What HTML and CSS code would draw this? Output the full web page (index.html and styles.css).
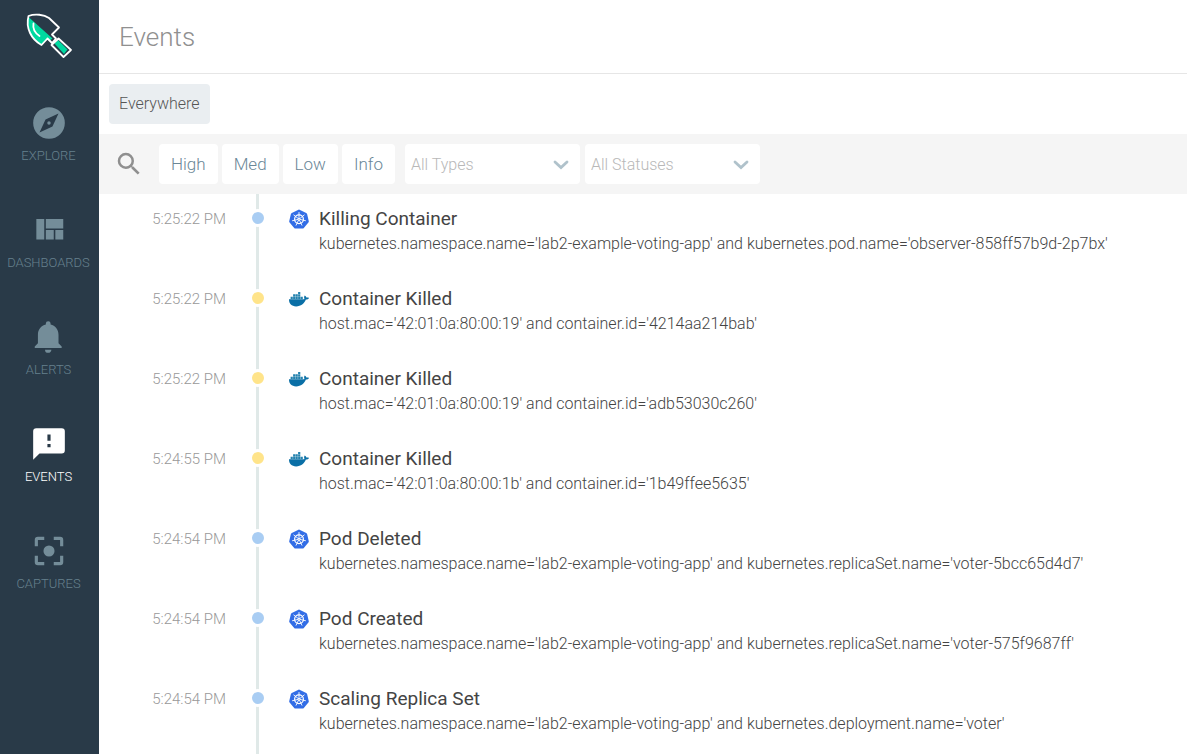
FILE: index.html
```html
<!DOCTYPE html>
<html lang="en">
<head>
<meta charset="utf-8">
<meta name="viewport" content="width=device-width, initial-scale=1">
<title>Events</title>
<link rel="stylesheet" href="styles.css">
</head>
<body>
<svg class="sprite" aria-hidden="true">
  <symbol id="kube" viewBox="0 0 20 20">
    <path fill="#326de6" d="M10 .5 17.2 3.9Q17.9 4.2 18.1 5L19.8 12.2Q19.9 13 19.4 13.6L14.8 19.1Q14.3 19.6 13.5 19.6H6.5Q5.7 19.6 5.2 19.1L.6 13.6Q.1 13 .2 12.2L1.9 5Q2.1 4.2 2.8 3.9Z"/>
    <g fill="none" stroke="#fff" stroke-linecap="round">
      <circle cx="10" cy="10.2" r="4.4" stroke-width="1.2"/>
      <path stroke-width=".9" d="M10 10.2V3.5M10 10.2 15.2 6M10 10.2 16.5 11.7M10 10.2 12.9 16.2M10 10.2 7.1 16.2M10 10.2 3.5 11.7M10 10.2 4.8 6"/>
    </g>
    <circle cx="10" cy="10.2" r="1.3" fill="#fff"/><circle cx="10" cy="10.2" r=".5" fill="#326de6"/>
  </symbol>
  <symbol id="docker" viewBox="0 0 20 20">
    <path fill="#0a6fa6" d="M0 10.3H14.2C14.7 10.3 15.2 10.1 15.5 9.9 14.9 8.8 15 7.4 15.8 6.5 16.8 7.1 17.3 7.8 17.4 8.6 18.4 8.3 19.4 8.5 20 8.9 19.4 10.1 18.3 10.6 16.9 10.6 15.2 14.8 12 17.4 7.1 17.4 2.3 17.400-.1 14.5 0 10.3Z"/>
    <path fill="#2582ae" d="M1.6 7.7h2.2v2.2H1.6zM4.1 7.7h2.2v2.2H4.1zM6.6 7.7h2.2v2.2H6.6zM9.1 7.7h2.2v2.2H9.1zM11.6 7.7h2.2v2.2h-2.2zM4.1 5.3h2.2v2.1H4.1zM6.6 5.3h2.2v2.1H6.6zM9.1 5.3h2.2v2.1H9.1zM9.1 2.9h2.2V5H9.1z"/>
  </symbol>
  <symbol id="chevron" viewBox="0 0 16 10">
    <path fill="none" stroke="#b0c2cb" stroke-width="2.8" stroke-linecap="round" d="M2 2 8 7.6 14 2"/>
  </symbol>
</svg>
<div class="app">
  <aside class="sidebar">
    <a class="logo" href="#" aria-label="Home">
      <svg viewBox="0 0 48 48" width="48" height="48">
        <path fill="#00d8a0" d="M3.5 5C1.5 16 6 27 16 33L22.500 26 25 28.500 27.500 26.500ZM29.500 31.500 33 28 42.500 37.500 39 42Z"/>
        <g fill="none" stroke="#fff" stroke-width="1.800" stroke-linejoin="round" stroke-linecap="round">
          <path d="M3.500 4C10 1.500 19 2.500 24 6L34 15.500 27 22.500 31 26.500 27 31 22.500 26.500 16.500 33C6 27 .5 16 3.500 4Z"/>
          <path d="M33.500 26.500 46 38 38.500 45 26.500 33Z"/>
          <path d="M8.500 11.500C7.500 17 10 21 14.500 24"/>
        </g>
      </svg>
    </a>
    <nav class="nav">
      <a class="nav-item" href="#"><svg viewBox="0 0 24 24"><path d="M12 10.900a1.100 1.100 0 1 0 0 2.200 1.100 1.100 0 0 0 0-2.200zM12 2a10 10 0 1 0 0 20 10 10 0 0 0 0-20zm2.190 12.190L6 18l3.810-8.190L18 6z"/></svg><span>EXPLORE</span></a>
      <a class="nav-item" href="#"><svg viewBox="0 0 24 24"><path d="M10 18h5v-6h-5zm-6 0h5V5H4zm12 0h5v-6h-5zM10 5v6h11V5z"/></svg><span>DASHBOARDS</span></a>
      <a class="nav-item" href="#"><svg viewBox="0 0 24 24"><path d="M11.500 22c1.100 0 2-.9 2-2h-4a2 2 0 0 0 2 2zm6.500-6v-5.500c0-3.070-2.130-5.640-5-6.320V3.500a1.500 1.500 0 0 0-3 0v.68c-2.870.68-5 3.250-5 6.320V16l-2 2v1h17v-1z"/></svg><span>ALERTS</span></a>
      <a class="nav-item active" href="#" aria-current="page"><svg viewBox="0 0 24 24"><path d="M20 2H4a2 2 0 0 0-2 2v18l4-4h14a2 2 0 0 0 2-2V4a2 2 0 0 0-2-2zm-7 12h-2v-2h2zm0-4h-2V6h2z"/></svg><span>EVENTS</span></a>
      <a class="nav-item" href="#"><svg viewBox="0 0 24 24"><path d="M5 15H3v4a2 2 0 0 0 2 2h4v-2H5zM5 5h4V3H5a2 2 0 0 0-2 2v4h2zm14-2h-4v2h4v4h2V5a2 2 0 0 0-2-2zm0 16h-4v2h4a2 2 0 0 0 2-2v-4h-2zM12 8.500a3.500 3.500 0 1 0 0 7 3.500 3.500 0 0 0 0-7z"/></svg><span>CAPTURES</span></a>
    </nav>
  </aside>
  <main class="main">
    <header class="header"><h1>Events</h1></header>
    <div class="scope"><button class="chip" type="button">Everywhere</button></div>
    <div class="filters">
      <button class="search" type="button" aria-label="Search"><svg viewBox="0 0 24 24" width="30" height="30"><path d="M15.500 14h-.79l-.28-.27A6.470 6.470 0 0 0 16 9.500 6.500 6.500 0 1 0 9.500 16c1.610 0 3.090-.59 4.230-1.570l.27.28v.79l5 4.990L20.490 19zm-6 0a4.500 4.500 0 1 1 0-9 4.500 4.500 0 0 1 0 9z"/></svg></button>
      <div class="levels">
        <button type="button">High</button><button type="button">Med</button><button type="button">Low</button><button type="button">Info</button>
      </div>
      <div class="selects">
        <div class="select"><select aria-label="Types"><option>All Types</option></select><svg><use href="#chevron"/></svg></div>
        <div class="select"><select aria-label="Statuses"><option>All Statuses</option></select><svg><use href="#chevron"/></svg></div>
      </div>
    </div>
    <ol class="events">
      <li class="event"><time>5:25:22 PM</time><div class="track"><i class="dot info"></i></div><svg class="source"><use href="#kube"/></svg><div class="body"><h2>Killing Container</h2><p>kubernetes.namespace.name='lab2-example-voting-app' and kubernetes.pod.name='observer-858ff57b9d-2p7bx'</p></div></li>
      <li class="event"><time>5:25:22 PM</time><div class="track"><i class="dot low"></i></div><svg class="source"><use href="#docker"/></svg><div class="body"><h2>Container Killed</h2><p>host.mac='42:01:0a:80:00:19' and container.id='4214aa214bab'</p></div></li>
      <li class="event"><time>5:25:22 PM</time><div class="track"><i class="dot low"></i></div><svg class="source"><use href="#docker"/></svg><div class="body"><h2>Container Killed</h2><p>host.mac='42:01:0a:80:00:19' and container.id='adb53030c260'</p></div></li>
      <li class="event"><time>5:24:55 PM</time><div class="track"><i class="dot low"></i></div><svg class="source"><use href="#docker"/></svg><div class="body"><h2>Container Killed</h2><p>host.mac='42:01:0a:80:00:1b' and container.id='1b49ffee5635'</p></div></li>
      <li class="event"><time>5:24:54 PM</time><div class="track"><i class="dot info"></i></div><svg class="source"><use href="#kube"/></svg><div class="body"><h2>Pod Deleted</h2><p>kubernetes.namespace.name='lab2-example-voting-app' and kubernetes.replicaSet.name='voter-5bcc65d4d7'</p></div></li>
      <li class="event"><time>5:24:54 PM</time><div class="track"><i class="dot info"></i></div><svg class="source"><use href="#kube"/></svg><div class="body"><h2>Pod Created</h2><p>kubernetes.namespace.name='lab2-example-voting-app' and kubernetes.replicaSet.name='voter-575f9687ff'</p></div></li>
      <li class="event"><time>5:24:54 PM</time><div class="track"><i class="dot info"></i></div><svg class="source"><use href="#kube"/></svg><div class="body"><h2>Scaling Replica Set</h2><p>kubernetes.namespace.name='lab2-example-voting-app' and kubernetes.deployment.name='voter'</p></div></li>
    </ol>
  </main>
</div>
</body>
</html>
```
FILE: styles.css
```css
* { box-sizing: border-box; }

body {
  margin: 0;
  font-family: Roboto, "Liberation Sans", sans-serif;
  font-weight: 300;
  font-size: 16px;
  color: #444;
  background: #fff;
}

button, select { font: inherit; border: 0; margin: 0; }
h1, h2, p, ol { margin: 0; padding: 0; }

.sprite { position: absolute; width: 0; height: 0; }

.app { display: flex; min-height: 100vh; }

.sidebar {
  flex: 0 0 99px;
  background: #293a48;
  display: flex;
  flex-direction: column;
  gap: 44px;
  padding: 12px 2px 0 0;
}

.logo { display: flex; justify-content: center; }
.logo svg { display: block; }

.nav { display: flex; flex-direction: column; gap: 47px; }

.nav-item {
  display: flex;
  flex-direction: column;
  align-items: center;
  gap: 6px;
  font-size: 13px;
  line-height: 16px;
  color: #66808d;
  text-decoration: none;
}

.nav-item svg { width: 38px; height: 38px; fill: #748d99; }
.nav-item.active { color: #fff; }
.nav-item.active svg { fill: #fff; }

.main { flex: 1; min-width: 0; display: flex; flex-direction: column; }

.header { padding: 21px 20px 19px; border-bottom: 1px solid #e6e6e6; }
.header h1 { font-size: 26px; line-height: 33px; font-weight: 300; color: #909090; }

.scope { padding: 10px; display: flex; }

.chip {
  padding: 0 10px;
  line-height: 40px;
  border-radius: 4px;
  background: #eaeef1;
  color: #555;
}

.filters {
  display: flex;
  align-items: center;
  padding: 10px 15px;
  background: #f5f5f5;
}

.search { padding: 0; background: none; margin-right: 15px; }
.search svg { display: block; fill: #8f8f8f; }

.levels { display: flex; gap: 4px; }
.selects { display: flex; gap: 5px; margin-left: 10px; }

.levels button {
  padding: 0 12px;
  font-size: 17px;
  line-height: 40px;
  border-radius: 4px;
  background: #fff;
  color: #6b8797;
}

.select { position: relative; width: 175px; }

.select select {
  appearance: none;
  width: 100%;
  height: 40px;
  padding: 0 32px 0 6px;
  font-size: 16px;
  border-radius: 4px;
  background: #fff;
  color: #b8b8b8;
}

.select svg {
  position: absolute;
  right: 11px;
  top: 16px;
  width: 16px;
  height: 10px;
  pointer-events: none;
}

.events { list-style: none; }

.event {
  display: grid;
  grid-template-columns: 127px 63px 20px 1fr;
  min-height: 80px;
}

.event time {
  padding-top: 14px;
  text-align: right;
  font-size: 15px;
  line-height: 22px;
  color: #999;
}

.track {
  display: flex;
  justify-content: center;
  align-items: flex-start;
  padding-top: 15px;
  background: linear-gradient(#e0e9e8, #e0e9e8) center / 3px 100% no-repeat;
}

.dot {
  width: 18px;
  height: 18px;
  border: 3px solid #fff;
  border-radius: 50%;
}

.dot.info { background: #a9cdf3; }
.dot.low { background: #ffe48a; }

.source { width: 20px; height: 20px; margin-top: 15px; }

.body { padding: 13px 10px 0; }
.body h2 { font-size: 19px; line-height: 24px; font-weight: 400; color: #444; }
.body p { font-size: 16px; line-height: 26px; }
```
